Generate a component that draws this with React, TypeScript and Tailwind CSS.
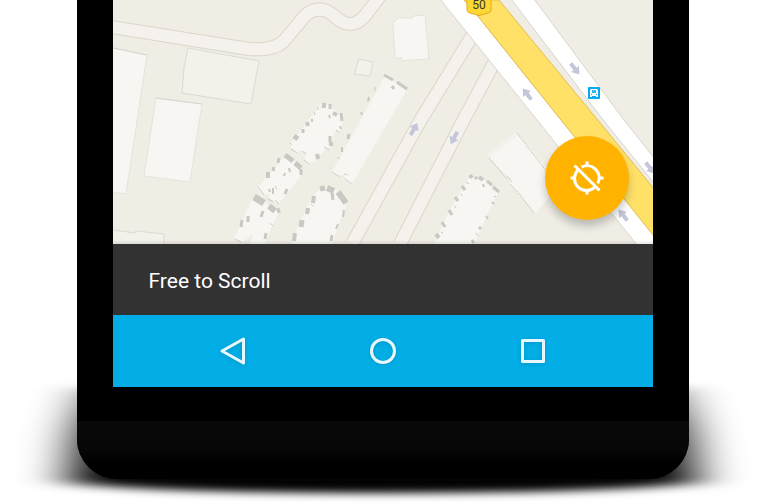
type Point = { x: number; y: number };

const smallRoads = [
  'M105 26 L249 49 Q272 51 283 42 L304 17 Q312 8 324 10 C335 13 338 24 350 24 Q357 24 364 17 L384 -9',
  'M352 244 L420 121 L480 23',
  'M400 244 L463 121 L502 48',
];

const outlinedBuildings = [
  '188,48 259,61 251,104 182,93 184,68',
  '359,59 373,62 370,76 354,74',
  '100,228 135,233 136,231 164,234 163,250 100,250',
];

const buildings = [
  '100,45 147,55 126,194 100,191',
  '156,98 202,104 190,182 144,176',
  '393,23 398,18 412,18 413,16 425,15 429,59 413,60 402,61 402,58 395,58',
];

const blocks = [
  '385,76 393,81 396,83 407,90 352,184 345,179 344,175 340,176 332,172',
  '320,105 328,104 337,112 343,120 341,130 335,131 330,147 326,149 316,160 309,164 304,161 306,154 300,151 295,153 291,149 290,144',
  '286,155 301,168 302,174 290,190 279,203 270,199 268,194 262,196 257,188',
  '253,197 264,200 268,205 280,210 273,224 264,246 249,246 253,234 243,242 234,239',
  '322,187 333,187 346,199 345,212 340,220 332,246 291,246 298,226 312,197',
  '470,176 482,179 499,192 492,205 478,235 474,246 433,246 447,215',
  '489,157 517,133 560,185 535,214 519,193 510,184 511,177 507,177',
];

/* Shaded roof details: x1 y1 x2 y2 width */
const shades: [number, number, number, number, number][] = [
  [384, 75, 393, 80, 3], [397, 82, 407, 89, 3], [392, 86, 394, 89, 3],
  [375, 87, 375, 91, 1], [369, 97, 368, 101, 2], [361, 112, 362, 115, 2],
  [349, 134, 348, 139, 3], [342, 147, 342, 152, 2], [338, 157, 339, 159, 1],
  [322, 105, 326, 106, 5], [330, 104, 330, 109, 3], [318, 107, 318, 110, 1],
  [333, 113, 337, 115, 4], [341, 113, 342, 121, 3], [329, 115, 330, 118, 2],
  [314, 112, 315, 115, 1], [312, 119, 312, 122, 2], [307, 122, 308, 126, 4],
  [303, 129, 303, 133, 3], [294, 136, 298, 139, 5], [340, 126, 341, 129, 2],
  [330, 136, 330, 142, 3], [331, 142, 331, 146, 4], [317, 154, 318, 159, 4],
  [336, 130, 339, 133, 1], [324, 147, 329, 150, 1], [291, 149, 297, 153, 1],
  [304, 160, 309, 164, 1], [302, 151, 306, 154, 1], [290, 143, 292, 145, 1],
  [285, 155, 293, 161, 5], [295, 163, 301, 168, 5], [301, 169, 301, 175, 3],
  [279, 158, 278, 163, 3], [274, 167, 273, 171, 3], [268, 172, 268, 178, 4],
  [285, 173, 284, 176, 2], [289, 168, 290, 172, 2], [287, 189, 285, 194, 3],
  [273, 188, 273, 194, 2], [269, 189, 270, 192, 2], [258, 187, 264, 195, 1],
  [268, 199, 273, 202, 1], [275, 200, 279, 204, 1], [275, 186, 277, 189, 1],
  [254, 197, 264, 203, 7], [269, 206, 275, 211, 6], [277, 211, 280, 210, 5],
  [263, 211, 261, 217, 3], [248, 216, 248, 222, 3], [242, 220, 241, 227, 3],
  [266, 233, 265, 239, 3], [235, 239, 241, 242, 1], [270, 223, 273, 226, 1],
  [320, 189, 325, 188, 5], [327, 188, 334, 191, 6], [338, 192, 346, 203, 6],
  [332, 193, 333, 200, 3], [314, 196, 313, 203, 4], [308, 208, 307, 214, 4],
  [302, 220, 301, 227, 5], [295, 233, 294, 241, 4], [344, 210, 343, 217, 2],
  [338, 224, 336, 229, 2], [332, 235, 331, 241, 3], [311, 204, 313, 206, 1],
  [470, 175, 472, 178, 4], [475, 177, 477, 179, 3], [479, 177, 483, 180, 4],
  [487, 181, 492, 185, 3], [493, 187, 499, 192, 3], [483, 184, 484, 187, 2],
  [462, 186, 465, 190, 3], [455, 197, 458, 201, 3], [449, 210, 452, 215, 3],
  [442, 222, 445, 227, 3], [436, 234, 439, 238, 4], [461, 194, 462, 196, 1],
  [454, 206, 456, 208, 1], [466, 182, 469, 184, 1], [492, 202, 494, 204, 2],
  [486, 216, 488, 219, 2], [479, 227, 481, 229, 3], [472, 240, 474, 243, 3],
  [494, 196, 496, 197, 1], [476, 233, 478, 236, 1], [441, 232, 443, 233, 1],
];

const arrows: (Point & { angle: number })[] = [
  { x: 414, y: 129, angle: 30 },
  { x: 454, y: 138, angle: 208 },
  { x: 527, y: 94, angle: -38 },
  { x: 575, y: 69, angle: 142 },
  { x: 623, y: 215, angle: -38 },
  { x: 650, y: 168, angle: 142 },
];

function StreetMap() {
  return (
    <svg
      className="block h-full w-full"
      viewBox="113 0 540 244"
      preserveAspectRatio="xMidYMid slice"
      role="img"
      aria-label="Street map"
    >
      <rect x="-400" y="-200" width="1600" height="700" fill="#efede4" />
      <g fill="none">
        {smallRoads.map((d) => (
          <path key={d} d={d} stroke="#dbd6cb" strokeWidth="14" />
        ))}
        {smallRoads.map((d) => (
          <path key={d} d={d} stroke="#f5f2ed" strokeWidth="12" />
        ))}
      </g>
      <g fill="#f2f2ea" stroke="#dadad7">
        {outlinedBuildings.map((p) => (
          <polygon key={p} points={p} />
        ))}
      </g>
      <g fill="#f7f6f2" stroke="#e4e3dc">
        {buildings.map((p) => (
          <polygon key={p} points={p} />
        ))}
      </g>
      <path d="M113 48 L147 55 M156 98 L202 104" stroke="#d6d5cf" fill="none" />
      <g fill="#f7f6f2">
        {blocks.map((p) => (
          <polygon key={p} points={p} />
        ))}
      </g>
      <path d="M487 153 L516 132 L518 135 L489 158 Z" fill="#f3f1eb" />
      <path
        d="M517 133 L547 172 M489 158 L507 179 M507 176 L512 182 M510 184 L520 195 L535 214 M332 172 L340 177 M344 174 L348 175 M345 179 L352 184"
        stroke="#c6c5be"
        strokeDasharray="2 1"
        fill="none"
      />
      <g stroke="#c9c8c2">
        {shades.map(([x1, y1, x2, y2, w]) => (
          <line key={`${x1}-${y1}`} x1={x1} y1={y1} x2={x2} y2={y2} strokeWidth={w} />
        ))}
      </g>

      <polygon points="511,-1 604,121 700,240 724,246 624,120 534,-1" fill="#fff" stroke="#d8d5cd" />
      <polygon points="440,-1 541,125 637,245 664,245 565,125 464,-1" fill="#fff" stroke="#d8d5cd" />
      <polygon points="464,0 477,15 565,125 661,245 700,245 601,124 499,0" fill="#ffe168" stroke="#e2bd55" />

      <g fill="#c5c6d9">
        {arrows.map(({ x, y, angle }) => (
          <path
            key={`${x}-${y}`}
            d="M0 -7 L5 0 L2 0 L2 7 L-2 7 L-2 0 L-5 0 Z"
            transform={`translate(${x} ${y}) rotate(${angle})`}
          />
        ))}
      </g>

      <path
        d="M467 -8 H491 V10 Q491 12 488 13 L481 15 Q479 16 477 15 L470 13 Q467 12 467 10 Z"
        fill="#fdd835"
        stroke="#e0ab20"
      />
      <text
        x="479"
        y="9"
        textAnchor="middle"
        className="font-['Roboto',sans-serif] text-[12px]"
        fill="#3a3526"
      >
        50
      </text>

      <rect x="588" y="87" width="12" height="12" rx="1" fill="#03a9f4" />
      <path d="M591 89 H597 L598 90 V97 H596 V96 H592 V97 H590 V90 Z" fill="#fff" />
      <rect x="592" y="90" width="4" height="3" fill="#35b9f5" />
      <path d="M591 94 H592 V95 H591 Z M596 94 H597 V95 H596 Z" fill="#03a9f4" />
    </svg>
  );
}

function LocationOffIcon() {
  return (
    <svg className="size-9" viewBox="0 0 36 36" fill="none" stroke="#fff" strokeWidth="3" aria-hidden="true">
      <path d="M12.6 7.2 A12 12 0 0 1 28.8 23.4" />
      <path d="M9 10 A12 12 0 0 0 26 27" />
      <path d="M18 1.5 V7 M18 29 V34.5 M1.5 18 H7 M29 18 H34.5" />
      <path d="M5.5 5.5 L30.5 30.5" />
    </svg>
  );
}

function PhoneShadow() {
  return (
    <svg
      className="absolute inset-0 h-full w-full"
      viewBox="0 0 765 504"
      preserveAspectRatio="none"
      aria-hidden="true"
    >
      <defs>
        <filter id="side-blur" x="-20%" y="-30%" width="140%" height="160%">
          <feGaussianBlur stdDeviation="24 4" />
        </filter>
        <linearGradient id="side-fade" x1="0" y1="384" x2="0" y2="484" gradientUnits="userSpaceOnUse">
          <stop offset="0" stopOpacity="0.4" />
          <stop offset="0.4" stopOpacity="0.8" />
          <stop offset="1" stopOpacity="1" />
        </linearGradient>
      </defs>
      <path
        d="M84 388 H681 L692 440 L696 483 Q600 493 383 493 Q166 493 69 483 L73 440 Z"
        fill="url(#side-fade)"
        filter="url(#side-blur)"
      />
    </svg>
  );
}

export default function App() {
  return (
    <main className="relative min-h-screen overflow-hidden bg-white pb-6 font-['Roboto',sans-serif]">
      <PhoneShadow />
      <div className="relative mx-auto w-4/5 overflow-hidden rounded-b-[40px] bg-black">
        <div className="mx-9 mb-[34px]">
          <section className="relative h-[244px] overflow-hidden">
            <StreetMap />
            <button
              type="button"
              aria-label="Location tracking off"
              className="absolute right-6 bottom-6 flex size-[84px] items-center justify-center rounded-full bg-[#ffb300] shadow-[0_6px_9px_rgba(0,0,0,0.22)]"
            >
              <LocationOffIcon />
            </button>
            <div className="absolute inset-x-0 bottom-0 h-1 bg-linear-to-t from-black/10 to-transparent" />
          </section>
          <p role="status" className="bg-[#323232] px-9 pt-6 pb-5 text-[21px] leading-[27px] text-white">
            Free to Scroll
          </p>
          <nav className="flex h-[72px] items-center justify-center gap-[114px] bg-[#03aee6]">
            <button type="button" aria-label="Back">
              <svg className="size-9 drop-shadow-sm" viewBox="0 0 36 36" fill="none" stroke="#e8f7fd" strokeWidth="3" strokeLinejoin="round">
                <path d="M7 18 L28.5 6 V30 Z" />
              </svg>
            </button>
            <button type="button" aria-label="Home">
              <svg className="size-9 drop-shadow-sm" viewBox="0 0 36 36" fill="none" stroke="#e8f7fd" strokeWidth="3">
                <circle cx="18" cy="18" r="11.5" />
              </svg>
            </button>
            <button type="button" aria-label="Recent apps">
              <svg className="size-9 drop-shadow-sm" viewBox="0 0 36 36" fill="none" stroke="#e8f7fd" strokeWidth="3" strokeLinejoin="round">
                <path d="M7.5 7.5 H28.5 V28.5 H7.5 Z" />
              </svg>
            </button>
          </nav>
        </div>
        <div className="h-[58px] bg-linear-to-b from-[#090909] via-[#070707] to-black" />
      </div>
    </main>
  );
}
